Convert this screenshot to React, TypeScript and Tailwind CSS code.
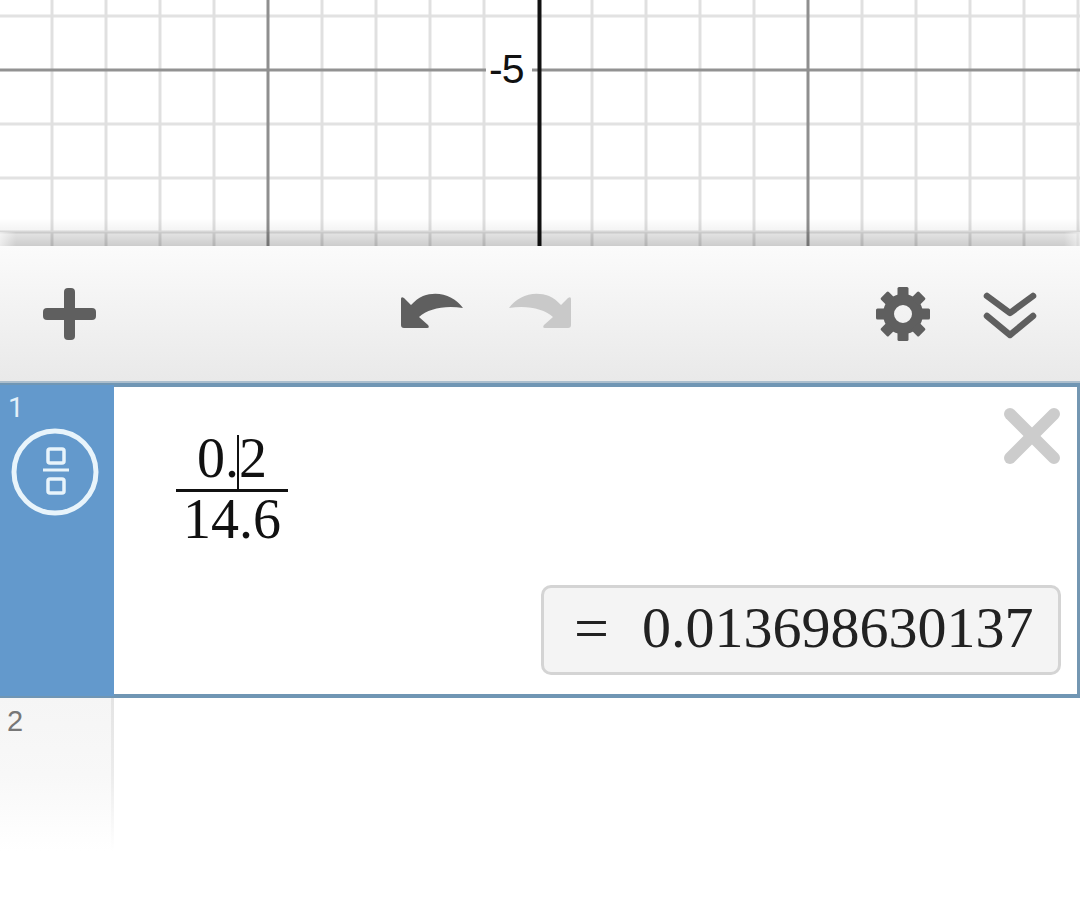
import React from 'react';

const MINOR_X = [52, 106, 160, 214, 322, 376, 430, 484, 592, 646, 700, 754, 862, 916, 970, 1024, 1078];
const MAJOR_X = [268, 808];
const MINOR_Y = [16, 124, 178, 232];

function GridLines() {
  return (
    <svg width="1080" height="246" className="block">
      {MINOR_Y.map((y) => (
        <line key={y} x1="0" x2="1080" y1={y} y2={y} stroke="#e2e2e2" strokeWidth="3" />
      ))}
      {MINOR_X.map((x) => (
        <line key={x} x1={x} x2={x} y1="0" y2="246" stroke="#e0e0e0" strokeWidth="3" />
      ))}
      <line x1="0" x2="1080" y1="70" y2="70" stroke="#929292" strokeWidth="3" />
      {MAJOR_X.map((x) => (
        <line key={x} x1={x} x2={x} y1="0" y2="246" stroke="#8f8f8f" strokeWidth="3" />
      ))}
      <rect x="486" y="52" width="46" height="34" fill="#ffffff" />
      <line x1="539.5" x2="539.5" y1="0" y2="246" stroke="#111111" strokeWidth="4" />
    </svg>
  );
}

function PlusIcon() {
  return (
    <svg width="53" height="52" viewBox="0 0 53 52" fill="#5f5f5f">
      <rect x="0" y="20" width="53" height="12" rx="4" />
      <rect x="21" y="0" width="11" height="52" rx="4" />
    </svg>
  );
}

function UndoIcon({ color, flip }: { color: string; flip?: boolean }) {
  return (
    <svg width="64" height="36" viewBox="0 0 64 36" fill={color} className={flip ? '-scale-x-100' : ''}>
      <path d="M1 6 L1 32 Q1 35 4 35 L27 35 Q30 35 28 32 L19 24 C28 16 44 12 63 15 C55 3 38 -3 23 3 C18 5 15 8 11 12 L4 5 Q1 3 1 6 Z" />
    </svg>
  );
}

function GearIcon() {
  const angles = [0, 45, 90, 135, 180, 225, 270, 315];
  return (
    <svg width="54" height="54" viewBox="0 0 54 54" fill="#5f5f5f">
      <circle cx="27" cy="27" r="14.5" fill="none" stroke="#5f5f5f" strokeWidth="11" />
      {angles.map((a) => (
        <rect key={a} x="21.5" y="0" width="11" height="10" rx="1.5" transform={`rotate(${a} 27 27)`} />
      ))}
    </svg>
  );
}

function ChevronsIcon() {
  return (
    <svg width="54" height="48" viewBox="0 0 54 48" fill="none" stroke="#5f5f5f" strokeWidth="6.5" strokeLinecap="round" strokeLinejoin="round">
      <path d="M4 4 L27 21 L50 4" />
      <path d="M4 24 L27 43 L50 24" />
    </svg>
  );
}

function CloseIcon() {
  return (
    <svg width="56" height="56" viewBox="0 0 56 56" fill="none" stroke="#cccccc" strokeWidth="12" strokeLinecap="round">
      <path d="M6 6 L50 50" />
      <path d="M50 6 L6 50" />
    </svg>
  );
}

function FractionIcon() {
  return (
    <svg width="88" height="88" viewBox="0 0 88 88" fill="none" stroke="#e8f4fb">
      <circle cx="44" cy="44" r="41" strokeWidth="5" />
      <rect x="37" y="21" width="16" height="14" rx="2" strokeWidth="3.5" />
      <line x1="32" x2="58" y1="42" y2="42" strokeWidth="3" />
      <rect x="37" y="51" width="16" height="14" rx="2" strokeWidth="3.5" />
    </svg>
  );
}

export default function App() {
  return (
    <div className="w-[1080px] h-[912px] bg-white overflow-hidden font-['Liberation_Sans',sans-serif]">
      {/* graph paper */}
      <div className="relative h-[246px] bg-white overflow-hidden">
        <GridLines />
        <span className="absolute left-[489px] top-[45px] text-[41px] leading-[48px] text-[#111] tracking-[-1px]">-5</span>
        <div className="absolute inset-x-0 top-[218px] h-[14px] bg-gradient-to-b from-transparent to-black/5" />
        <div className="absolute inset-x-0 top-[232px] h-[14px] bg-gradient-to-b from-black/10 to-black/20" />
        <div className="absolute left-0 top-[232px] h-[14px] w-[16px] bg-gradient-to-r from-white/60 to-transparent" />
        <div className="absolute right-0 top-[232px] h-[14px] w-[16px] bg-gradient-to-l from-white/60 to-transparent" />
      </div>

      {/* toolbar */}
      <div className="h-[135px] flex items-center pl-[43px] pt-[1px] bg-gradient-to-b from-[#fbfbfb] to-[#e9e9e9]">
        <PlusIcon />
        <div className="ml-[304px] mb-[7px]">
          <UndoIcon color="#5f5f5f" />
        </div>
        <div className="ml-[44px] mb-[7px]">
          <UndoIcon color="#c9c9c9" flip />
        </div>
        <div className="ml-[304px]">
          <GearIcon />
        </div>
        <div className="ml-[53px] mt-[4px]">
          <ChevronsIcon />
        </div>
      </div>

      {/* expression 1 */}
      <div className="h-[2px] bg-[#abbecd]" />
      <div className="h-[315px] flex border-y-4 border-[#7096b4]">
        <div className="w-[114px] -my-[2px] bg-[#6399cc] pt-[11px] pl-[8px] shrink-0">
          <div className="text-[28px] leading-[24px] text-[#e3f0f9] font-['Roboto',sans-serif]">1</div>
          <div className="mt-[8px] ml-[3px]">
            <FractionIcon />
          </div>
        </div>
        <div className="flex-1 flex flex-col bg-white border-r-[3px] border-[#7497b2] font-['Liberation_Serif',serif]">
          <div className="flex justify-between pt-[21px] pl-[62px] pr-[17px]">
            <div className="w-[112px] mt-[25px] flex flex-col items-center text-[56px] leading-[50px] text-[#111]">
              <div className="relative pb-[6px]">
                0.2
                <span className="absolute left-[40px] top-[2px] h-[55px] w-[2px] bg-[#111]" />
              </div>
              <div className="w-full h-[3px] bg-[#111]" />
              <div className="pt-[2px]">14.6</div>
            </div>
            <CloseIcon />
          </div>
          <div className="mt-auto mb-[19px] mr-[16px] self-end w-[520px] h-[90px] flex items-center pl-[30px] pb-[4px] rounded-[10px] border-[3px] border-[#d4d4d4] bg-[#f4f4f4] text-[58px] leading-none text-[#222]">
            <span className="w-[68px] text-[62px]">=</span>
            <span>0.013698630137</span>
          </div>
        </div>
      </div>

      {/* expression 2 */}
      <div className="relative h-[153px] w-[114px] pt-[7px] pl-[7px] bg-gradient-to-b from-[#f5f5f5] via-[#f8f8f8] to-white">
        <div className="text-[29px] leading-[32px] text-[#777]">2</div>
        <div className="absolute right-0 top-0 h-full w-[3px] bg-gradient-to-b from-[#e4e4e4] via-[#ececec] to-white" />
      </div>
    </div>
  );
}
